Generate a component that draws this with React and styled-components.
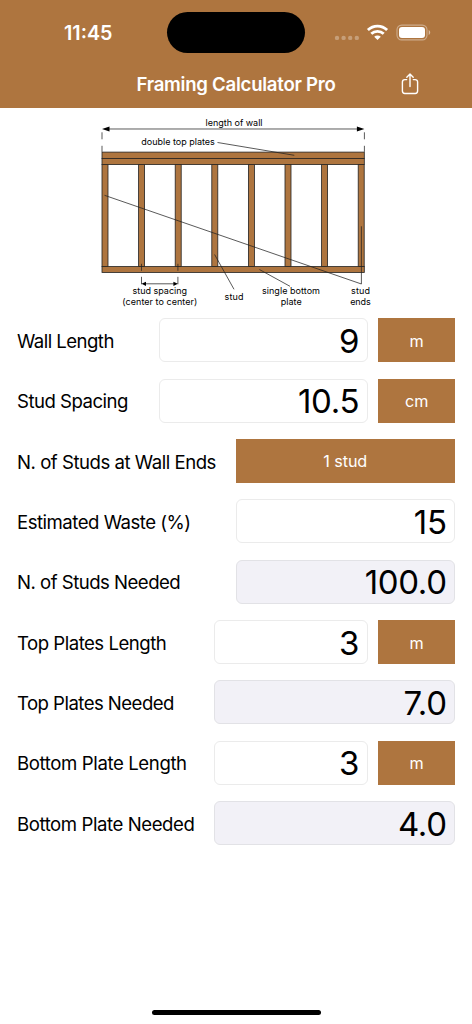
import styled, { createGlobalStyle } from "styled-components";

const brown = "#ae753f";

const GlobalStyle = createGlobalStyle`
  * {
    box-sizing: border-box;
  }

  body {
    margin: 0;
    background: #fff;
    font-family: Inter, "Liberation Sans", sans-serif;
    color: #000;
  }
`;

const Screen = styled.div`
  display: flex;
  flex-direction: column;
  width: 472px;
  height: 1024px;
  overflow: hidden;
`;

const Header = styled.header`
  height: 107.5px;
  background: ${brown};
  color: #fff;
`;

const StatusBar = styled.div`
  display: grid;
  grid-template-columns: 167px 138px 1fr;
  align-items: center;
  height: 65px;
`;

const Time = styled.div`
  padding-left: 64px;
  font-size: 19.7px;
  font-weight: 600;
`;

const Island = styled.div`
  height: 41px;
  border-radius: 21px;
  background: #000;
`;

const Signals = styled.div`
  padding-left: 29px;

  svg {
    display: block;
  }
`;

const NavBar = styled.div`
  display: grid;
  grid-template-columns: 1fr auto 1fr;
  align-items: center;
  height: 38px;
`;

const Title = styled.h1`
  grid-column: 2;
  margin: 0;
  font-size: 18.6px;
  font-weight: 600;
  letter-spacing: -0.26px;
  white-space: nowrap;
`;

const ShareButton = styled.button`
  display: flex;
  justify-self: end;
  margin-right: 53.5px;
  padding: 0;
  border: none;
  background: none;
  color: #fff;
`;

const Diagram = styled.svg`
  display: block;
  width: 472px;
  height: 210.8px;
  flex: none;

  text {
    font-family: Inter, sans-serif;
    font-size: 9px;
    fill: #000;
  }
`;

const Form = styled.main`
  display: flex;
  flex-direction: column;
  gap: 16.35px;
  padding: 0 17px;
`;

const Row = styled.div`
  display: flex;
  align-items: center;
  gap: 10.75px;
  height: 44px;
`;

const Label = styled.label`
  flex: 1;
  min-width: 0;
  padding-top: 1.4px;
  font-size: 18.6px;
  letter-spacing: ${(p) => p.$spacing}px;
  white-space: nowrap;
`;

const Field = styled.div`
  display: flex;
  flex: none;
  align-items: center;
  justify-content: flex-end;
  width: ${(p) => p.$width}px;
  height: 44px;
  padding: 1px 7.4px 0 0;
  border: 1px solid ${(p) => (p.$result ? "#e2e2e6" : "#ebebeb")};
  border-radius: 6px;
  background: ${(p) => (p.$result ? "#f2f1f7" : "#fff")};
  font-size: 33px;
  letter-spacing: -0.35px;
`;

const Picker = styled.button`
  flex: none;
  width: ${(p) => p.$width || 76.75}px;
  height: 44px;
  padding: 1px 0 0;
  border: none;
  background: ${brown};
  color: #fff;
  font-family: inherit;
  font-size: 16.2px;
  letter-spacing: -0.1px;
`;

const HomeIndicator = styled.div`
  width: 169px;
  height: 5.5px;
  margin: auto auto 9px;
  border-radius: 3px;
  background: #000;
`;

const studs = [0, 1, 2, 3, 4, 5, 6, 7];

const captions = [
  { text: "length of wall", x: 205.5, y: 126, width: 57 },
  { text: "double top plates", x: 141.3, y: 144.7, width: 73.5 },
  { text: "stud spacing", x: 132.5, y: 294, width: 54.5 },
  { text: "(center to center)", x: 122.3, y: 305, width: 75 },
  { text: "stud", x: 224.5, y: 299.5, width: 19 },
  { text: "single bottom", x: 262, y: 294, width: 58 },
  { text: "plate", x: 280.7, y: 305, width: 21 },
  { text: "stud", x: 351, y: 294, width: 19 },
  { text: "ends", x: 350.2, y: 305, width: 20.5 },
];

const rows = [
  { label: "Wall Length", spacing: -0.55, value: "9", width: 208.5, unit: "m" },
  { label: "Stud Spacing", spacing: -0.52, value: "10.5", width: 208.5, unit: "cm" },
  { label: "N. of Studs at Wall Ends", spacing: -0.48, choice: "1 stud" },
  { label: "Estimated Waste (%)", spacing: -0.5, value: "15", width: 219.5 },
  { label: "N. of Studs Needed", spacing: -0.52, value: "100.0", width: 219.5, result: true },
  { label: "Top Plates Length", spacing: -0.5, value: "3", width: 154, unit: "m" },
  { label: "Top Plates Needed", spacing: -0.55, value: "7.0", width: 241.5, result: true },
  { label: "Bottom Plate Length", spacing: -0.39, value: "3", width: 154, unit: "m" },
  { label: "Bottom Plate Needed", spacing: -0.43, value: "4.0", width: 241.5, result: true },
];

function StatusIcons() {
  return (
    <svg width="98" height="24" viewBox="334 20.5 98 24" fill="#fff">
      <g opacity="0.3">
        <circle cx="337" cy="37.4" r="2.2" />
        <circle cx="343.6" cy="37.4" r="2.2" />
        <circle cx="350.2" cy="37.4" r="2.2" />
        <circle cx="356.8" cy="37.4" r="2.2" />
      </g>
      <g fill="none" stroke="#fff" strokeWidth="2.8">
        <path d="M367.9 29.6a13.7 13.7 0 0 1 19.2 0" />
        <path d="M371.3 33.3a8.9 8.9 0 0 1 12.4 0" />
      </g>
      <path d="M377.5 39.6l-3.3-3.3a4.7 4.7 0 0 1 6.6 0z" />
      <rect
        x="397"
        y="24.6"
        width="30"
        height="14.8"
        rx="4.7"
        fill="none"
        stroke="#fff"
        strokeOpacity="0.4"
        strokeWidth="1.1"
      />
      <rect x="399" y="26.6" width="26" height="10.8" rx="3" />
      <path d="M428.7 29.6v4.8c2-.8 2-4 0-4.8z" opacity="0.5" />
    </svg>
  );
}

function ShareIcon() {
  return (
    <svg
      width="18"
      height="22"
      viewBox="0 0 18 22"
      fill="none"
      stroke="currentColor"
      strokeWidth="1.4"
      strokeLinecap="round"
      strokeLinejoin="round"
    >
      <path d="M5.7 6.6H3.8A2.4 2.4 0 0 0 1.4 9v9.1a2.4 2.4 0 0 0 2.4 2.4h10.4a2.4 2.4 0 0 0 2.4-2.4V9a2.4 2.4 0 0 0-2.4-2.4h-1.9" />
      <path d="M9 13.6V1.2M5.8 4.2L9 1l3.2 3.2" />
    </svg>
  );
}

function WallDiagram() {
  return (
    <Diagram viewBox="0 107.7 472 210.8">
      <g fill={brown} stroke="#222" strokeWidth="0.8">
        {studs.map((i) => (
          <rect key={i} x={102 + i * 36.6} y="164.3" width="6" height="102" />
        ))}
        <rect x="102" y="151.8" width="262.3" height="6.3" />
        <rect x="102" y="158.1" width="262.3" height="6.2" />
        <rect x="102" y="266.2" width="262.3" height="6" />
      </g>
      <g stroke="#222" strokeWidth="0.75" fill="none">
        <path d="M106 128.7H360M102 132v7M102 145.5v6M364.4 132v7M364.4 145.5v6" />
        <path d="M217.5 142.2L294.3 155" />
        <path d="M104.5 195L361.4 283.7V226" />
        <path d="M214.6 254.2L234 289" />
        <path d="M259.4 269.2L290 286" />
        <path d="M144 283.5H176M141.5 263.5v7M141.5 276.5v7.5M177.9 263.5v7M177.9 276.5v7.5" />
      </g>
      <g fill="#000">
        <path d="M102 128.7l7.5-2.6v5.2zM364.4 128.7l-7.5-2.6v5.2z" />
        <path d="M141.5 283.5l4.5-2.1v4.2zM177.9 283.5l-4.5-2.1v4.2z" />
      </g>
      {captions.map((c) => (
        <text key={c.text + c.x} x={c.x} y={c.y} textLength={c.width}>
          {c.text}
        </text>
      ))}
    </Diagram>
  );
}

export default function App() {
  return (
    <>
      <GlobalStyle />
      <Screen>
        <Header>
          <StatusBar>
            <Time>11:45</Time>
            <Island />
            <Signals>
              <StatusIcons />
            </Signals>
          </StatusBar>
          <NavBar>
            <Title>Framing Calculator Pro</Title>
            <ShareButton aria-label="Share">
              <ShareIcon />
            </ShareButton>
          </NavBar>
        </Header>
        <WallDiagram />
        <Form>
          {rows.map((r) => (
            <Row key={r.label}>
              <Label $spacing={r.spacing}>{r.label}</Label>
              {r.value && (
                <Field $width={r.width} $result={r.result}>
                  {r.value}
                </Field>
              )}
              {r.unit && <Picker>{r.unit}</Picker>}
              {r.choice && <Picker $width={219.5}>{r.choice}</Picker>}
            </Row>
          ))}
        </Form>
        <HomeIndicator />
      </Screen>
    </>
  );
}
